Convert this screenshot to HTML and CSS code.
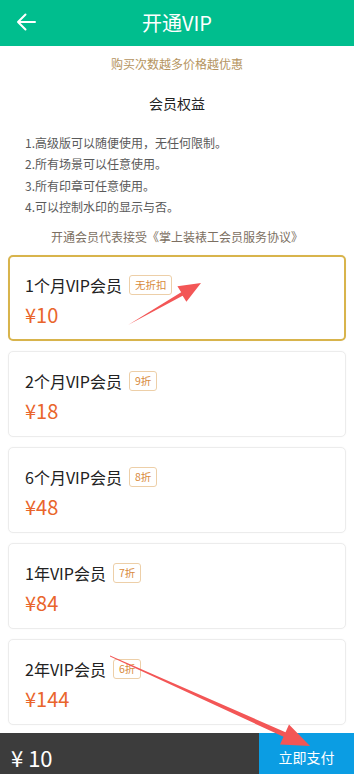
FILE: index.html
```html
<!DOCTYPE html>
<html lang="zh-CN">
<head>
    <meta charset="UTF-8">
    <meta name="viewport" content="width=device-width, initial-scale=1.0">
    <title>开通VIP</title>
    <link rel="stylesheet" href="styles.css">
</head>
<body>
    <div class="page">
        <!-- Header -->
        <div class="header">
            <span class="back-btn">
                <svg width="20" height="18" viewBox="0 0 20 18">
                    <path d="M19 9H2M9.5 1.5L2 9l7.5 7.5" fill="none" stroke="#fff" stroke-width="2" stroke-linecap="round" stroke-linejoin="round"/>
                </svg>
            </span>
            <h1 class="title">开通VIP</h1>
        </div>

        <p class="tip">购买次数越多价格越优惠</p>

        <!-- Benefits -->
        <h3 class="benefit-title">会员权益</h3>
        <ul class="benefit-list">
            <li>1.高级版可以随便使用，无任何限制。</li>
            <li>2.所有场景可以任意使用。</li>
            <li>3.所有印章可任意使用。</li>
            <li>4.可以控制水印的显示与否。</li>
        </ul>

        <p class="agreement">开通会员代表接受《掌上装裱工会员服务协议》</p>

        <!-- Plans -->
        <div class="plan-list">
            <div class="plan-item active">
                <div class="plan-name">1个月VIP会员<span class="badge">无折扣</span></div>
                <div class="plan-price">¥10</div>
            </div>
            <div class="plan-item">
                <div class="plan-name">2个月VIP会员<span class="badge">9折</span></div>
                <div class="plan-price">¥18</div>
            </div>
            <div class="plan-item">
                <div class="plan-name">6个月VIP会员<span class="badge">8折</span></div>
                <div class="plan-price">¥48</div>
            </div>
            <div class="plan-item">
                <div class="plan-name">1年VIP会员<span class="badge">7折</span></div>
                <div class="plan-price">¥84</div>
            </div>
            <div class="plan-item">
                <div class="plan-name">2年VIP会员<span class="badge">6折</span></div>
                <div class="plan-price">¥144</div>
            </div>
        </div>

        <!-- Pay bar -->
        <div class="pay-bar">
            <div class="total">¥ 10</div>
            <button class="pay-btn">立即支付</button>
        </div>

        <!-- Annotation arrows -->
        <svg class="marks" width="354" height="774" viewBox="0 0 354 774">
            <polygon points="128,325 181.2,292.2 177.4,286.2 201,283 186.4,301.8 182.6,295.8" fill="#f35656"/>
            <polygon points="110,655.4 285.5,732.2 289,724.5 310,746 280,744.5 283.5,736.8 110,656.6" fill="#f35656"/>
        </svg>
    </div>
</body>
</html>
```

FILE: styles.css
```css
* {
    margin: 0;
    padding: 0;
    box-sizing: border-box;
}

body {
    font-family: "Noto Sans CJK SC", "Noto Sans", sans-serif;
    background-color: #fff;
    color: #333;
}

.page {
    position: relative;
    width: 354px;
    height: 774px;
    overflow: hidden;
}

/* Header */
.header {
    position: relative;
    height: 46px;
    background-color: #00be8e;
    display: flex;
    align-items: center;
    justify-content: center;
}

.back-btn {
    position: absolute;
    left: 16px;
    top: 13px;
    display: flex;
}

.title {
    font-size: 20px;
    font-weight: normal;
    color: #fff;
    line-height: 26px;
}

.tip {
    margin-top: 9px;
    font-size: 12px;
    line-height: 18px;
    text-align: center;
    color: #b59460;
}

.benefit-title {
    margin-top: 20px;
    font-size: 14px;
    font-weight: normal;
    line-height: 20px;
    text-align: center;
    color: #222;
}

.benefit-list {
    list-style: none;
    margin-top: 19px;
    padding-left: 25px;
}

.benefit-list li {
    font-size: 12px;
    line-height: 21.4px;
    color: #5a5a5a;
}

.agreement {
    margin-top: 10px;
    font-size: 12px;
    line-height: 18px;
    text-align: center;
    color: #7c6f62;
}

/* Plans */
.plan-list {
    margin-top: 9px;
    padding: 0 8px 0 8px;
    display: flex;
    flex-direction: column;
    gap: 10px;
}

.plan-item {
    height: 86px;
    padding: 18px 16px 0 16px;
    border: 1px solid #ececec;
    border-radius: 5px;
    background-color: #fff;
    box-shadow: 0 0 2px rgba(0, 0, 0, 0.04);
}

.plan-item.active {
    border: 2px solid #d8b44c;
    padding: 17px 15px 0 15px;
}

.plan-name {
    display: flex;
    align-items: center;
    font-size: 16px;
    line-height: 22px;
    color: #222;
}

.badge {
    margin-left: 7px;
    padding: 0 5px;
    height: 20px;
    line-height: 18px;
    font-size: 10.5px;
    color: #d88a3c;
    border: 1px solid #edcfa8;
    border-radius: 3px;
}

.plan-price {
    margin-top: 6px;
    font-size: 20px;
    line-height: 26px;
    color: #e9652b;
}

/* Pay bar */
.pay-bar {
    margin-top: 8px;
    height: 41px;
    display: flex;
    background-color: #3c3c3c;
}

.total {
    flex: 1;
    padding: 10px 0 0 11px;
    font-size: 22px;
    line-height: 28px;
    color: #fff;
}

.pay-btn {
    width: 95px;
    border: none;
    background-color: #0b9de3;
    color: #fff;
    font-family: inherit;
    font-size: 14px;
    padding-top: 8px;
}

.marks {
    position: absolute;
    left: 0;
    top: 0;
    pointer-events: none;
}
```
